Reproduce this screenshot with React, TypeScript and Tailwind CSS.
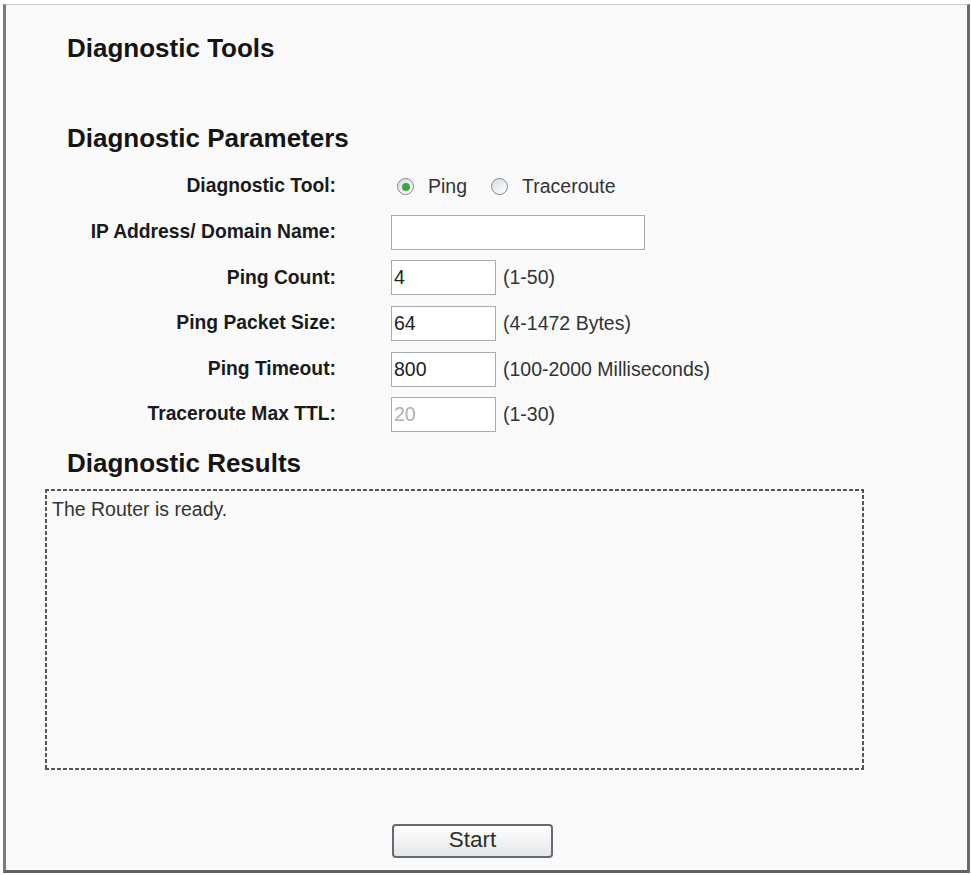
import React from "react";

interface RowProps {
	label: string;
	children: React.ReactNode;
}

const Row: React.FC<RowProps> = ({ label, children }) => {
	return (
		<div className="flex flex-row items-center h-[45.6px]">
			<div className="w-[330px] text-right font-bold text-[19.3px] text-[#1a1a1a]">{label}</div>
			<div className="flex flex-row items-center ml-[55px]">{children}</div>
		</div>
	);
};

const Radio: React.FC<{ checked?: boolean }> = ({ checked }) => {
	return (
		<span className="flex items-center justify-center w-[17px] h-[17px] rounded-full border-[1.5px] border-[#7d8a96] bg-gradient-to-br from-[#d8dde3] to-[#ffffff]">
			{checked ? <span className="w-[8px] h-[8px] rounded-full bg-[#38a838]" /> : null}
		</span>
	);
};

const Field: React.FC<{ value: string; wide?: boolean; disabled?: boolean; hint?: string }> = ({ value, wide, disabled, hint }) => {
	return (
		<>
			<div
				className={
					(wide ? "w-[254px]" : "w-[105px]") +
					" h-[35px] border border-[#a3abb4] bg-white flex items-center pl-[2px] text-[19.5px] " +
					(disabled ? "text-[#b0b0b0]" : "text-[#222]")
				}
			>
				{value}
			</div>
			{hint ? <span className="ml-[7px] text-[19.5px] text-[#333]">{hint}</span> : null}
		</>
	);
};

export default function App() {
	return (
		<div className="w-[971px] h-[875px] bg-white pt-[4px] pl-[3px] font-['Liberation_Sans',Arial,sans-serif]">
			<div className="w-[967px] h-[869px] bg-[#fafafa] border-l-[3px] border-l-[#7c7c7c] border-t border-t-[#c8c8c8] border-r-[3px] border-r-[#6c6c6c] border-b-[3px] border-b-[#626262]">
				<h1 className="mt-[28px] pl-[61px] text-[26px] leading-[30px] font-bold text-[#151515]">Diagnostic Tools</h1>
				<h2 className="mt-[60px] pl-[61px] text-[26px] leading-[30px] font-bold text-[#151515]">Diagnostic Parameters</h2>

				<div className="mt-[11px] flex flex-col">
					<Row label="Diagnostic Tool:">
						<div className="flex flex-row items-center text-[19.5px] text-[#333]">
							<span className="ml-[6px]"><Radio checked /></span>
							<span className="ml-[14px]">Ping</span>
							<span className="ml-[24px]"><Radio /></span>
							<span className="ml-[14px]">Traceroute</span>
						</div>
					</Row>
					<Row label="IP Address/ Domain Name:">
						<Field value="" wide />
					</Row>
					<Row label="Ping Count:">
						<Field value="4" hint="(1-50)" />
					</Row>
					<Row label="Ping Packet Size:">
						<Field value="64" hint="(4-1472 Bytes)" />
					</Row>
					<Row label="Ping Timeout:">
						<Field value="800" hint="(100-2000 Milliseconds)" />
					</Row>
					<Row label="Traceroute Max TTL:">
						<Field value="20" disabled hint="(1-30)" />
					</Row>
				</div>

				<h2 className="mt-[10px] pl-[61px] text-[26px] leading-[30px] font-bold text-[#151515]">Diagnostic Results</h2>

				{/* dashed frame drawn with short dashes, like the router page */}
				<div className="mt-[11px] ml-[39px] w-[819px] h-[281px] pt-[9px] pl-[7px] text-[19.5px] leading-[23px] text-[#333] [background-image:linear-gradient(to_right,#555_65%,transparent_0),linear-gradient(to_right,#555_65%,transparent_0),linear-gradient(to_bottom,#555_65%,transparent_0),linear-gradient(to_bottom,#555_65%,transparent_0)] [background-size:6px_2px,6px_2px,2px_6px,2px_6px] [background-position:left_top,left_bottom,left_top,right_top] [background-repeat:repeat-x,repeat-x,repeat-y,repeat-y]">
					The Router is ready.
				</div>

				<div className="mt-[54px] ml-[386px]">
					<button className="w-[161px] h-[34px] rounded-[4px] border-2 border-[#646b74] bg-gradient-to-b from-[#ffffff] to-[#e4e6e8] text-[22.5px] text-[#2e2e2e] leading-none">
						Start
					</button>
				</div>
			</div>
		</div>
	);
}
